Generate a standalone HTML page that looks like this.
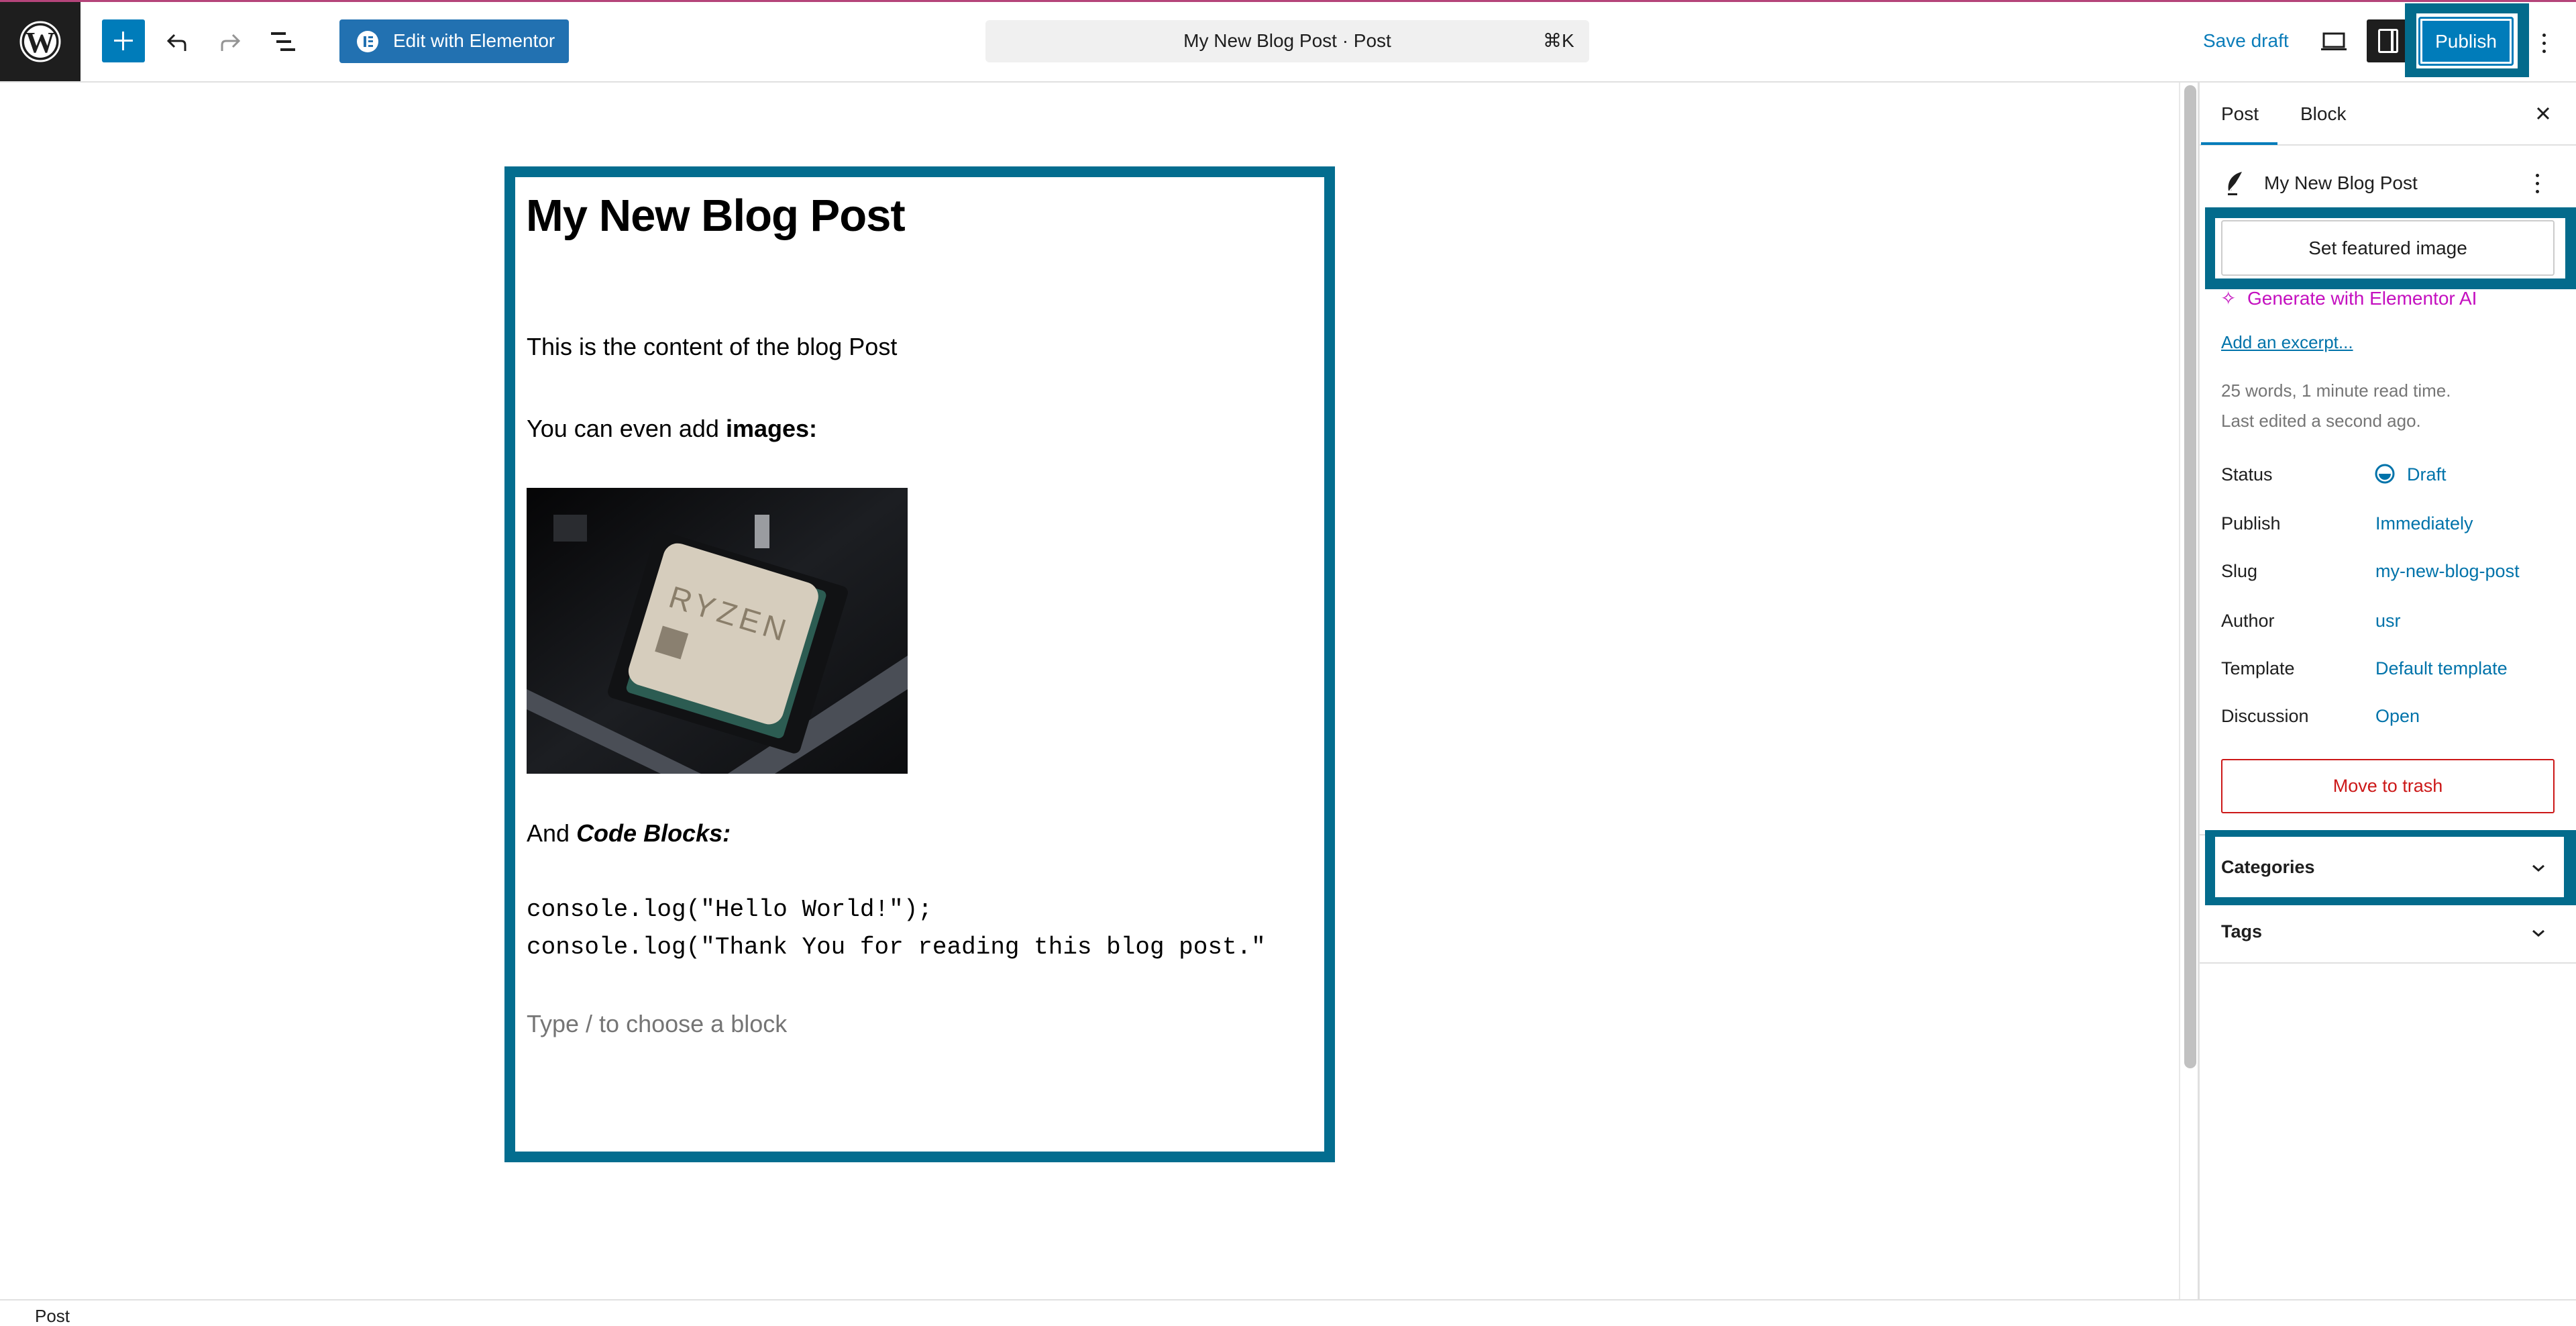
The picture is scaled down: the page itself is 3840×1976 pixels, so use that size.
<!DOCTYPE html>
<html><head><meta charset="utf-8"><style>
*{margin:0;padding:0;box-sizing:border-box}
body{width:3840px;height:1968px;background:#fff;position:relative;overflow:hidden;font-family:"Liberation Sans",sans-serif;color:#1e1e1e}
.a{position:absolute}
.t{position:absolute;white-space:nowrap;line-height:1}
.blue{color:#0073aa}
</style></head><body>
<!-- top bar -->
<div class="a" style="left:0;top:0;width:3840px;height:3px;background:#b5447a"></div>
<div class="a" style="left:0;top:121px;width:3840px;height:2px;background:#e0e0e0"></div>
<div class="a" style="left:0;top:3px;width:120px;height:118px;background:#1e1e1e"></div>
<svg class="a" style="left:28px;top:30px" width="64" height="64" viewBox="0 0 64 64">
<circle cx="32" cy="32" r="29" fill="none" stroke="#fff" stroke-width="3"/>
<circle cx="32" cy="32" r="24" fill="#fff"/>
<text x="32" y="48" text-anchor="middle" font-family="Liberation Serif,serif" font-weight="bold" font-size="44" fill="#1e1e1e">W</text>
</svg>
<div class="a" style="left:152px;top:29px;width:64px;height:64px;background:#007cba;border-radius:3px"></div>
<div class="a" style="left:182px;top:47px;width:3px;height:28px;background:#fff"></div>
<div class="a" style="left:170px;top:59px;width:28px;height:3px;background:#fff"></div>
<svg class="a" style="left:246px;top:44px" width="36" height="36" viewBox="0 0 36 36"><path d="M14 8 L5 17 L14 26 M5 17 H24 Q30 17 30 23 V32" fill="none" stroke="#1e1e1e" stroke-width="3"/></svg>
<svg class="a" style="left:325px;top:44px" width="36" height="36" viewBox="0 0 36 36"><path d="M22 8 L31 17 L22 26 M31 17 H12 Q6 17 6 23 V32" fill="none" stroke="#949494" stroke-width="3"/></svg>
<div class="a" style="left:404px;top:48px;width:22px;height:4px;background:#1e1e1e"></div>
<div class="a" style="left:412px;top:60px;width:22px;height:4px;background:#1e1e1e"></div>
<div class="a" style="left:418px;top:72px;width:22px;height:4px;background:#1e1e1e"></div>
<div class="a" style="left:506px;top:29px;width:342px;height:65px;background:#2271b1;border-radius:4px"></div>
<div class="a" style="left:532px;top:46px;width:32px;height:32px;background:#fff;border-radius:50%"></div>
<div class="a" style="left:542px;top:54px;width:4px;height:16px;background:#2271b1"></div>
<div class="a" style="left:549px;top:54px;width:7px;height:3px;background:#2271b1"></div>
<div class="a" style="left:549px;top:60px;width:7px;height:3px;background:#2271b1"></div>
<div class="a" style="left:549px;top:67px;width:7px;height:3px;background:#2271b1"></div>
<div class="t" style="left:586px;top:47px;font-size:28px;color:#fff">Edit with Elementor</div>
<div class="a" style="left:1469px;top:30px;width:900px;height:63px;background:#f0f0f0;border-radius:6px"></div>
<div class="t" style="left:1469px;width:900px;text-align:center;top:47px;font-size:28px">My New Blog Post · Post</div>
<div class="t" style="left:2300px;top:47px;font-size:28px;font-family:'Liberation Sans','DejaVu Sans',sans-serif">⌘K</div>
<div class="t blue" style="left:3284px;top:47px;font-size:28px;color:#0a7cb9">Save draft</div>
<svg class="a" style="left:3458px;top:44px" width="42" height="36" viewBox="0 0 42 36"><rect x="6" y="6" width="30" height="20" fill="none" stroke="#1e1e1e" stroke-width="3"/><rect x="2" y="28" width="38" height="3" fill="#1e1e1e"/></svg>
<div class="a" style="left:3528px;top:29px;width:60px;height:64px;background:#1e1e1e;border-radius:3px 0 0 3px"></div>
<div class="a" style="left:3545px;top:43px;width:30px;height:36px;border:3px solid #fff;border-radius:3px"></div>
<div class="a" style="left:3564px;top:43px;width:4px;height:36px;background:#fff"></div>
<div class="a" style="left:3585px;top:5px;width:185px;height:110px;background:#036b8c"></div>
<div class="a" style="left:3602px;top:20px;width:151px;height:82px;background:#fff"></div>
<div class="a" style="left:3605px;top:25px;width:142px;height:73px;background:#007cba;border-radius:4px;box-shadow:inset 0 0 0 3px #007cba,inset 0 0 0 6px #fff"></div>
<div class="t" style="left:3605px;width:142px;text-align:center;top:48px;font-size:28px;color:#fff">Publish</div>
<div class="a" style="left:3790px;top:50px;width:5px;height:5px;background:#1e1e1e;border-radius:50%;box-shadow:0 12px 0 #1e1e1e,0 24px 0 #1e1e1e"></div>

<!-- canvas -->
<div class="a" style="left:3248px;top:123px;width:2px;height:1814px;background:#e8e8e8"></div>
<div class="a" style="left:3256px;top:127px;width:18px;height:1465px;background:#c1c1c1;border-radius:9px"></div>
<div class="a" style="left:3276px;top:123px;width:3px;height:1814px;background:#e0e0e0"></div>
<div class="a" style="left:0;top:1936px;width:3840px;height:2px;background:#e0e0e0"></div>
<div class="t" style="left:52px;top:1948px;font-size:26px">Post</div>

<div class="a" style="left:752px;top:248px;width:1238px;height:1484px;border:16px solid #036d8f"></div>
<div class="t" style="left:784px;top:288px;font-size:67px;font-weight:bold;color:#000;letter-spacing:-1px">My New Blog Post</div>
<div class="t" style="left:785px;top:499px;font-size:36px;color:#000">This is the content of the blog Post</div>
<div class="t" style="left:785px;top:621px;font-size:36px;color:#000">You can even add <b>images:</b></div>
<svg class="a" style="left:785px;top:727px" width="568" height="426" viewBox="0 0 568 426">
<defs><linearGradient id="g" x1="0" y1="0" x2="1" y2="1"><stop offset="0" stop-color="#050506"/><stop offset="0.5" stop-color="#1c1e22"/><stop offset="1" stop-color="#0c0d0f"/></linearGradient></defs>
<rect width="568" height="426" fill="url(#g)"/>
<path d="M0 330 L200 426 L260 426 L0 300Z M300 426 L568 250 L568 300 L370 426Z" fill="#4a4e56"/>
<rect x="40" y="40" width="50" height="40" fill="#2a2c30"/>
<rect x="340" y="40" width="22" height="50" fill="#9a9ca0"/>
<g transform="translate(300 230) rotate(17)">
<rect x="-150" y="-130" width="300" height="260" rx="10" fill="#111214"/>
<rect x="-125" y="-115" width="245" height="230" rx="8" fill="#2c5c52"/>
<rect x="-130" y="-120" width="240" height="220" rx="22" fill="#d6cdbd"/>
<text x="-10" y="-25" text-anchor="middle" font-size="46" font-family="Liberation Sans,sans-serif" fill="#8a7e6a" letter-spacing="6">RYZEN</text>
<rect x="-100" y="5" width="40" height="40" fill="#8a8070"/>
</g>
</svg>
<div class="t" style="left:785px;top:1224px;font-size:36px;color:#000">And <b><i>Code Blocks:</i></b></div>
<div class="t" style="left:785px;top:1328px;font-size:36px;font-family:'Liberation Mono',monospace;color:#000;line-height:56px">console.log("Hello World!");<br>console.log("Thank You for reading this blog post."</div>
<div class="t" style="left:785px;top:1508px;font-size:36px;color:#757575">Type / to choose a block</div>

<!-- sidebar -->
<div class="t" style="left:3311px;top:156px;font-size:28px">Post</div>
<div class="t" style="left:3429px;top:156px;font-size:28px">Block</div>
<svg class="a" style="left:3776px;top:154px" width="30" height="30" viewBox="0 0 30 30"><path d="M7 7L23 23M23 7L7 23" stroke="#1e1e1e" stroke-width="3"/></svg>
<div class="a" style="left:3279px;top:215px;width:561px;height:2px;background:#e0e0e0"></div>
<div class="a" style="left:3281px;top:212px;width:114px;height:4px;background:#007cba"></div>
<svg class="a" style="left:3316px;top:254px" width="34" height="40" viewBox="0 0 34 40"><path d="M26 2 C10 6 4 18 6 30 L10 30 C14 22 20 14 26 2Z" fill="#1e1e1e"/><path d="M8 30 L22 14" stroke="#fff" stroke-width="2"/><rect x="5" y="34" width="14" height="3" fill="#1e1e1e"/></svg>
<div class="t" style="left:3375px;top:259px;font-size:28px">My New Blog Post</div>
<div class="a" style="left:3780px;top:259px;width:5px;height:5px;background:#1e1e1e;border-radius:50%;box-shadow:0 12px 0 #1e1e1e,0 24px 0 #1e1e1e"></div>

<div class="a" style="left:3287px;top:309px;width:553px;height:122px;background:#036b8c"></div>
<div class="a" style="left:3302px;top:325px;width:522px;height:90px;background:#fff"></div>
<div class="a" style="left:3311px;top:328px;width:497px;height:83px;border:2px solid #ccc;border-radius:4px"></div>
<div class="t" style="left:3311px;width:497px;text-align:center;top:356px;font-size:28px">Set featured image</div>
<div class="t" style="left:3310px;top:431px;font-size:28px;color:#c40fbf">✧</div>
<div class="t" style="left:3350px;top:431px;font-size:28px;color:#c40fbf">Generate with Elementor AI</div>
<div class="t" style="left:3311px;top:497px;font-size:26px;color:#0073aa;text-decoration:underline">Add an excerpt...</div>
<div class="t" style="left:3311px;top:560px;font-size:26px;color:#757575;line-height:45px">25 words, 1 minute read time.<br>Last edited a second ago.</div>

<div class="t" style="left:3311px;top:694px;font-size:27px">Status</div>
<svg class="a" style="left:3538px;top:689px" width="34" height="34" viewBox="0 0 34 34"><circle cx="17" cy="17" r="13" fill="none" stroke="#0073aa" stroke-width="3"/><path d="M8 17 H26 A9 9 0 0 1 8 17Z" fill="#0073aa"/></svg>
<div class="t blue" style="left:3588px;top:694px;font-size:27px">Draft</div>
<div class="t" style="left:3311px;top:767px;font-size:27px">Publish</div>
<div class="t blue" style="left:3541px;top:767px;font-size:27px">Immediately</div>
<div class="t" style="left:3311px;top:838px;font-size:27px">Slug</div>
<div class="t blue" style="left:3541px;top:838px;font-size:27px">my-new-blog-post</div>
<div class="t" style="left:3311px;top:912px;font-size:27px">Author</div>
<div class="t blue" style="left:3541px;top:912px;font-size:27px">usr</div>
<div class="t" style="left:3311px;top:983px;font-size:27px">Template</div>
<div class="t blue" style="left:3541px;top:983px;font-size:27px">Default template</div>
<div class="t" style="left:3311px;top:1054px;font-size:27px">Discussion</div>
<div class="t blue" style="left:3541px;top:1054px;font-size:27px">Open</div>

<div class="a" style="left:3311px;top:1131px;width:497px;height:81px;border:2px solid #cc1818;border-radius:3px"></div>
<div class="t" style="left:3311px;width:497px;text-align:center;top:1158px;font-size:27px;color:#cc1818">Move to trash</div>

<div class="a" style="left:3279px;top:1243px;width:561px;height:2px;background:#e0e0e0"></div>
<div class="a" style="left:3287px;top:1237px;width:553px;height:112px;background:#036b8c"></div>
<div class="a" style="left:3302px;top:1247px;width:520px;height:90px;background:#fff"></div>
<div class="t" style="left:3311px;top:1279px;font-size:27px;font-weight:bold">Categories</div>
<svg class="a" style="left:3770px;top:1284px" width="28" height="20" viewBox="0 0 28 20"><path d="M6 6 L14 13 L22 6" fill="none" stroke="#1e1e1e" stroke-width="3"/></svg>
<div class="t" style="left:3311px;top:1375px;font-size:27px;font-weight:bold">Tags</div>
<svg class="a" style="left:3770px;top:1381px" width="28" height="20" viewBox="0 0 28 20"><path d="M6 6 L14 13 L22 6" fill="none" stroke="#1e1e1e" stroke-width="3"/></svg>
<div class="a" style="left:3279px;top:1434px;width:561px;height:2px;background:#e0e0e0"></div>
</body></html>
